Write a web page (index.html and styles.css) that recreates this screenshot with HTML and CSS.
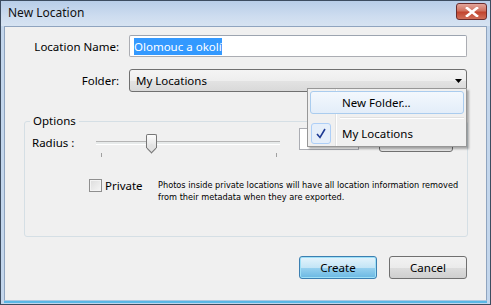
FILE: index.html
```html
<!DOCTYPE html>
<html lang="en">
<head>
<meta charset="UTF-8">
<title>New Location</title>
<link rel="stylesheet" href="styles.css">
</head>
<body>

<div class="window">
    <div class="titlebar">
        <span class="title">New Location</span>
        <div class="close">
            <svg width="14" height="10" viewBox="0 0 14 10">
                <path d="M2 1 L12 9 M12 1 L2 9" stroke="#fff" stroke-width="2.6" stroke-linecap="square"/>
            </svg>
        </div>
    </div>

    <div class="client">
        <div class="row">
            <label class="lbl">Location Name:</label>
            <div class="textbox"><span class="sel">Olomouc a okolí</span></div>
        </div>
        <div class="row row-folder">
            <label class="lbl">Folder:</label>
            <div class="combo">
                <span>My Locations</span>
                <svg class="arrow" width="7" height="4" viewBox="0 0 7 4"><path d="M0 0 H7 L3.5 4 Z" fill="#000"/></svg>
            </div>
        </div>

        <div class="options">
            <span class="legend">Options</span>
            <div class="radius-row">
                <span class="radius-lbl">Radius :</span>
                <div class="slider">
                    <div class="track"></div>
                    <div class="thumb"></div>
                    <div class="ticks"><span></span><span></span></div>
                </div>
                <div class="numbox"></div>
                <div class="unitbtn"></div>
            </div>
            <div class="private-row">
                <label class="check"><span class="box"></span>Private</label>
                <p class="note">Photos inside private locations will have all location information removed<br>from their metadata when they are exported.</p>
            </div>
        </div>

        <div class="actions">
            <button class="btn btn-default">Create</button>
            <button class="btn">Cancel</button>
        </div>

        <!-- открытый список папок -->
        <div class="menu">
            <div class="menu-item hot"><span class="gutter"></span><span>New Folder...</span></div>
            <div class="menu-sep"></div>
            <div class="menu-item">
                <span class="gutter"><span class="checkmark">
                    <svg width="10" height="11" viewBox="0 0 10 11"><path d="M1 6 L4 9.5 L9 1" stroke="#1e3a93" stroke-width="1.6" fill="none"/></svg>
                </span></span>
                <span>My Locations</span>
            </div>
        </div>
    </div>
</div>

</body>
</html>
```

FILE: styles.css
```css
body, html {
    margin: 0;
    padding: 0;
}

body {
    font-family: "Noto Sans", "Liberation Sans", sans-serif;
    font-size: 11.5px;
    color: #000;
}

.window {
    width: 491px;
    height: 305px;
    box-sizing: border-box;
    background: #c3d6ec;
    border: 1px solid #3c4c60;
    display: flex;
    flex-direction: column;
}

.titlebar {
    height: 25px;
    display: flex;
    align-items: center;
    justify-content: space-between;
    padding: 0 3px 0 7px;
    background: linear-gradient(#b7cde8, #cddcef 60%, #d6e3f2);
}

.title {
    font-size: 12px;
    color: #111;
    margin-top: -2px;
}

.close {
    width: 29px;
    height: 15px;
    margin-top: -4px;
    border: 1px solid #6b2d2d;
    border-radius: 3px;
    background: linear-gradient(#e3a59b, #d0725f 45%, #c2452f 55%, #d0705a);
    display: flex;
    align-items: center;
    justify-content: center;
}

.client {
    position: relative;
    flex: 1;
    margin: 0 3px 3px 3px;
    background: #f0f0f0;
    border: 1px solid #8fa4bf;
    border-bottom: 1px solid #aac7e2;
    box-shadow: 0 2px 0 #59b7e6;
}

.row {
    display: flex;
    align-items: center;
    margin-top: 8px;
}

.row-folder {
    margin-top: 12px;
}

.lbl {
    width: 114px;
    text-align: right;
    margin-right: 10px;
}

.textbox {
    width: 338px;
    height: 22px;
    box-sizing: border-box;
    background: #fff;
    border: 1px solid #abadb3;
    border-top-color: #9ca4b0;
    border-radius: 2px;
    display: flex;
    align-items: center;
    padding-left: 4px;
}

.sel {
    background: #3399ff;
    color: #fff;
    padding: 1px 0;
}

.combo {
    width: 338px;
    height: 23px;
    box-sizing: border-box;
    border: 1px solid #707070;
    border-radius: 3px;
    background: linear-gradient(#f4f4f4, #eeeeee 50%, #e3e3e3 51%, #d9d9d9);
    display: flex;
    align-items: center;
    justify-content: space-between;
    padding: 0 4px 0 6px;
}

.arrow {
    margin-top: 1px;
}

.options {
    position: relative;
    margin: 29px 18px 0 19px;
    height: 116px;
    box-sizing: border-box;
    border: 1px solid #d5dfe5;
    border-radius: 3px;
    padding: 13px 0 0 7px;
}

.legend {
    position: absolute;
    top: -9px;
    left: 5px;
    padding: 0 3px;
    background: #f0f0f0;
}

.radius-row {
    display: flex;
    align-items: flex-start;
}

.radius-lbl {
    width: 64px;
    line-height: 16px;
}

.slider {
    position: relative;
    width: 184px;
    height: 24px;
}

.track {
    margin-top: 6px;
    height: 2px;
    border-top: 1px solid #b5b5b5;
    border-bottom: 1px solid #fff;
    background: #e7eaea;
}

.thumb {
    position: absolute;
    left: 50px;
    top: -1px;
    width: 9px;
    height: 13px;
    border: 1px solid #777;
    border-bottom: none;
    border-radius: 2px 2px 0 0;
    background: linear-gradient(#fdfdfd, #e0e0e0);
}

.thumb::after {
    content: "";
    position: absolute;
    left: 1px;
    bottom: -4px;
    width: 6px;
    height: 6px;
    border-right: 1px solid #777;
    border-bottom: 1px solid #777;
    background: #e2e2e2;
    transform: rotate(45deg);
}

.ticks {
    display: flex;
    justify-content: space-between;
    padding: 0 3px 0 5px;
    margin-top: 8px;
}

.ticks span {
    width: 1px;
    height: 4px;
    background: #a0a0a0;
}

.numbox {
    width: 60px;
    height: 22px;
    margin: -7px 0 0 19px;
    background: #fff;
    border: 1px solid #abadb3;
    box-sizing: border-box;
}

.unitbtn {
    width: 74px;
    height: 23px;
    margin: -6px 0 0 20px;
    border: 1px solid #707070;
    border-radius: 3px;
    box-sizing: border-box;
    background: #e5e5e5;
}

.private-row {
    display: flex;
    align-items: flex-start;
    margin: 18px 0 0 57px;
}

.check {
    display: flex;
    align-items: center;
    width: 69px;
    margin-top: 1px;
}

.box {
    width: 11px;
    height: 11px;
    border: 1px solid #8f8f8f;
    background: linear-gradient(135deg, #dcdcdc, #f6f6f6);
    box-shadow: inset 0 0 0 1px #f4f4f4;
    margin-right: 3px;
}

.note {
    margin: 2px 0 0 0;
    font-family: "DejaVu Sans", sans-serif;
    font-size: 8.2px;
    line-height: 12px;
    white-space: nowrap;
}

.actions {
    display: flex;
    justify-content: flex-end;
    gap: 12px;
    margin: 19px 19px 0 0;
}

.btn {
    width: 78px;
    height: 23px;
    font-family: inherit;
    font-size: 11.5px;
    border: 1px solid #707070;
    border-radius: 3px;
    background: linear-gradient(#f2f2f2, #ebebeb 50%, #dddddd 51%, #cfcfcf);
    padding: 0;
}

.btn-default {
    border-color: #3c7fb1;
    background: linear-gradient(#e5f4fc, #c4e5f6 50%, #98d1ef 51%, #6ab8e3);
    box-shadow: inset 0 0 0 1px #9ee0f7;
}

.menu {
    position: absolute;
    left: 302px;
    top: 61px;
    width: 160px;
    height: 59px;
    background: #f0f0f0;
    border: 1px solid #979797;
    box-shadow: 2px 2px 2px rgba(0, 0, 0, 0.3);
    padding: 2px;
    box-sizing: border-box;
    background-image: linear-gradient(to right, transparent 27px, #e2e3e3 27px, #e2e3e3 28px, #fff 28px, #fff 29px, transparent 29px);
}

.menu-item {
    display: flex;
    align-items: center;
    height: 23px;
    box-sizing: border-box;
    border: 1px solid transparent;
    border-radius: 3px;
}

.menu-item.hot {
    border-color: #aaccee;
    background: linear-gradient(#f3f8fd, #e3edf9);
}

.gutter {
    width: 31px;
    display: flex;
}

.menu-sep {
    height: 1px;
    margin: 3px 0 3px 30px;
    background: #e0e0e0;
    border-bottom: 1px solid #fff;
}

.checkmark {
    width: 20px;
    height: 21px;
    margin-top: 0;
    box-sizing: border-box;
    border: 1px solid #aecff7;
    border-radius: 3px;
    background: #e6effa;
    display: flex;
    align-items: center;
    justify-content: center;
}
```
